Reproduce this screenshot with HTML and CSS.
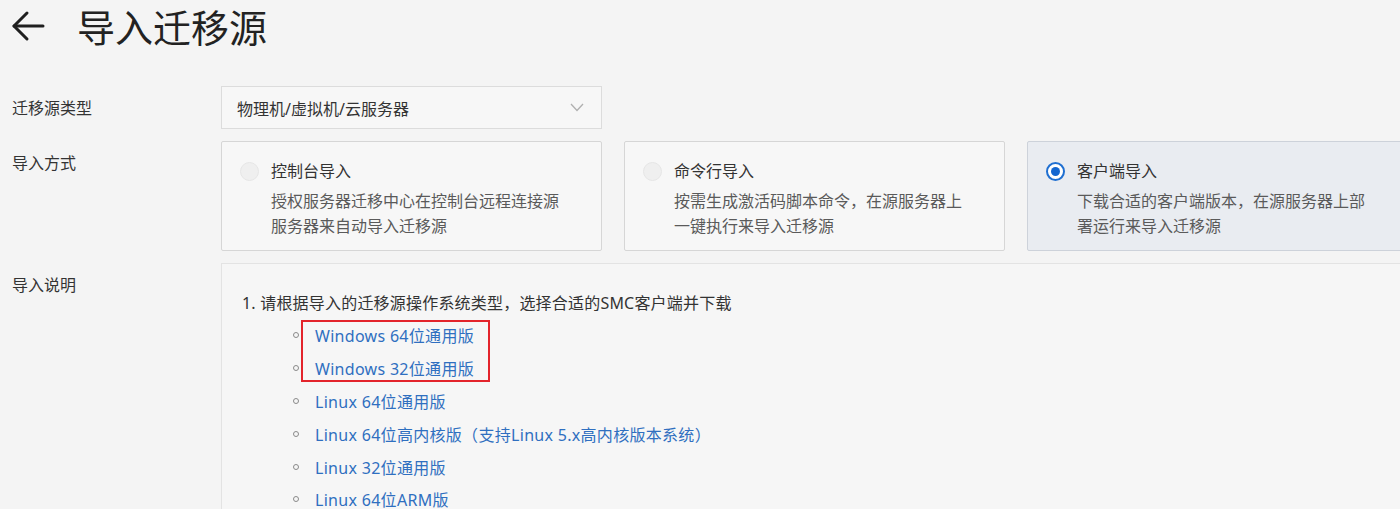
FILE: index.html
```html
<!DOCTYPE html>
<html lang="zh-CN">

<head>
    <meta charset="UTF-8">
    <meta name="viewport" content="width=device-width, initial-scale=1.0">
    <title>导入迁移源</title>
    <link rel="stylesheet" href="styles.css">
</head>

<body>
    <div class="page">
        <div class="page-header">
            <button class="back-btn" type="button">
                <svg width="34" height="32" viewBox="0 0 34 32" fill="none" stroke="#1f1f1f" stroke-width="3" stroke-linecap="round" stroke-linejoin="round">
                    <line x1="32" y1="16" x2="3" y2="16" />
                    <polyline points="16,3 3,16 16,29" />
                </svg>
            </button>
            <h1 class="page-title">导入迁移源</h1>
        </div>

        <div class="form">
            <div class="form-row">
                <div class="form-label">迁移源类型</div>
                <div class="select">
                    <span>物理机/虚拟机/云服务器</span>
                    <svg width="14" height="9" viewBox="0 0 14 9" fill="none" stroke="#b0b0b0" stroke-width="1.3">
                        <polyline points="1,1 7,7.5 13,1" />
                    </svg>
                </div>
            </div>

            <div class="form-row">
                <div class="form-label">导入方式</div>
                <div class="cards">
                    <div class="card">
                        <span class="radio"></span>
                        <div class="card-body">
                            <div class="card-title">控制台导入</div>
                            <div class="card-desc">授权服务器迁移中心在控制台远程连接源服务器来自动导入迁移源</div>
                        </div>
                    </div>
                    <div class="card">
                        <span class="radio"></span>
                        <div class="card-body">
                            <div class="card-title">命令行导入</div>
                            <div class="card-desc">按需生成激活码脚本命令，在源服务器上一键执行来导入迁移源</div>
                        </div>
                    </div>
                    <div class="card card-active">
                        <span class="radio radio-checked"></span>
                        <div class="card-body">
                            <div class="card-title">客户端导入</div>
                            <div class="card-desc">下载合适的客户端版本，在源服务器上部署运行来导入迁移源</div>
                        </div>
                    </div>
                </div>
            </div>

            <div class="form-row">
                <div class="form-label">导入说明</div>
                <div class="notes">
                    <p class="step">1. 请根据导入的迁移源操作系统类型，选择合适的SMC客户端并下载</p>
                    <ul class="downloads">
                        <li><a href="#">Windows 64位通用版</a></li>
                        <li><a href="#">Windows 32位通用版</a></li>
                        <li><a href="#">Linux 64位通用版</a></li>
                        <li><a href="#">Linux 64位高内核版（支持Linux 5.x高内核版本系统）</a></li>
                        <li><a href="#">Linux 32位通用版</a></li>
                        <li><a href="#">Linux 64位ARM版</a></li>
                        <span class="highlight"></span>
                    </ul>
                </div>
            </div>
        </div>
    </div>
</body>

</html>
```

FILE: styles.css
```css
body {
    margin: 0;
    padding: 0;
    background-color: #f4f4f4;
    font-family: "Noto Sans", "Noto Sans CJK SC", sans-serif;
    color: #333333;
    overflow: hidden;
}

.page {
    width: 1420px;
}

.page-header {
    display: flex;
    align-items: center;
    height: 52px;
    padding-left: 11px;
}

.back-btn {
    border: none;
    background: none;
    padding: 0;
    margin-right: 32px;
    display: flex;
    cursor: pointer;
}

.page-title {
    margin: 0;
    font-size: 38px;
    font-weight: 400;
    line-height: 52px;
    color: #222222;
    font-family: "Noto Sans CJK SC", sans-serif;
}

.form {
    margin-top: 34px;
    padding-left: 12px;
    display: flex;
    flex-direction: column;
    gap: 12px;
}

.form-row {
    display: flex;
}

.form-label {
    width: 209px;
    flex-shrink: 0;
    padding-top: 10px;
    font-size: 16px;
    line-height: 24px;
    color: #333333;
}

.select {
    box-sizing: border-box;
    width: 381px;
    height: 43px;
    border: 1px solid #dcdcdc;
    background-color: #f7f7f7;
    display: flex;
    align-items: center;
    justify-content: space-between;
    padding: 0 17px 0 15px;
    font-size: 16px;
    color: #333333;
}

.cards {
    display: grid;
    grid-template-columns: repeat(3, 381px);
    gap: 22px;
}

.card {
    box-sizing: border-box;
    height: 110px;
    border: 1px solid #d6d6d6;
    border-radius: 2px;
    background-color: #f7f7f7;
    display: flex;
    gap: 12px;
    padding: 17px 30px 11px 18px;
}

.card-active {
    background-color: #e9ecf1;
    border-color: #cdd2da;
}

.radio {
    box-sizing: border-box;
    flex-shrink: 0;
    width: 19px;
    height: 19px;
    margin-top: 3px;
    border-radius: 50%;
    border: 1px solid #e6e6e6;
    background-color: #efefef;
}

.radio-checked {
    border: 2px solid #1f6fd1;
    background-color: #ffffff;
    position: relative;
}

.radio-checked::after {
    content: "";
    position: absolute;
    left: 3px;
    top: 3px;
    width: 9px;
    height: 9px;
    border-radius: 50%;
    background-color: #1366d0;
}

.card-title {
    font-size: 16px;
    line-height: 25px;
    color: #333333;
    margin-bottom: 5px;
}

.card-desc {
    font-size: 16px;
    line-height: 25px;
    color: #5a5a5a;
}

.notes {
    box-sizing: border-box;
    width: 1200px;
    height: 260px;
    border: 1px solid #e3e3e3;
    background-color: #f6f6f6;
    padding: 27px 20px 0 20px;
}

.step {
    margin: 0;
    font-size: 16px;
    line-height: 24px;
    color: #333333;
    letter-spacing: 0.2px;
}

.downloads {
    position: relative;
    list-style: none;
    margin: 4px 0 0 0;
    padding-left: 51px;
}

.downloads li {
    display: flex;
    align-items: center;
    height: 32.8px;
    font-size: 16px;
}

.downloads li::before {
    content: "";
    box-sizing: border-box;
    width: 6px;
    height: 6px;
    border: 1.5px solid #8a8a8a;
    border-radius: 50%;
    margin-right: 16px;
}

.downloads a {
    color: #2f6fc0;
    text-decoration: none;
    letter-spacing: 0.3px;
}

/* red annotation box over the two windows links */
.highlight {
    position: absolute;
    left: 59px;
    top: 1px;
    width: 189px;
    height: 62px;
    box-sizing: border-box;
    border: 2px solid #e3242b;
}
```
